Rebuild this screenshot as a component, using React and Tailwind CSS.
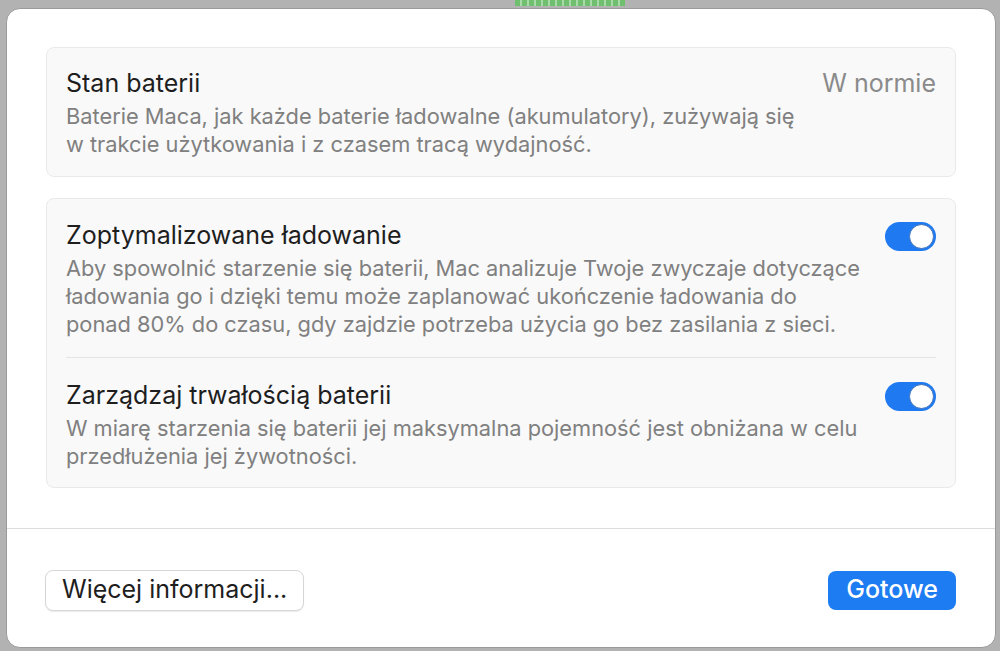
import React from 'react';

const Toggle = () => (
  <div className="flex h-[29px] w-[51px] shrink-0 items-center justify-end rounded-full bg-[#1f7af2] pr-[2px]">
    <div className="h-[25px] w-[25px] rounded-full border border-[#3b6fb8] bg-white" />
  </div>
);

const App = () => {
  return (
    <div
      className="flex h-[651px] w-[1000px] flex-col bg-[#b2b2b2] pl-[6px] pr-[4px] pb-[3px]"
      style={{ fontFamily: 'Inter, "Noto Sans", sans-serif' }}
    >
      <div className="flex h-[8px] shrink-0">
        <div className="ml-[509px] h-[6px] w-[110px] bg-[repeating-linear-gradient(90deg,#6fbf6f_0_5px,#a9d9a9_5px_7px)]" />
      </div>
      <div className="flex flex-1 flex-col overflow-hidden rounded-[14px] border border-[#9a9a9a] bg-white">
        <div className="flex flex-col gap-[21px] px-[39px] pt-[38px]">
          <div className="flex h-[130px] flex-col rounded-[8px] border border-[#e9e9e9] bg-[#f9f9f9] px-[19px] pt-[20px]">
            <div className="flex items-start justify-between">
              <div className="text-[25px] leading-[30px] text-[#1e1e1e]">Stan baterii</div>
              <div className="text-[25px] leading-[30px] text-[#8a8a8a]">W normie</div>
            </div>
            <p className="mt-[4px] text-[21.8px] leading-[28px] text-[#808080]">
              Baterie Maca, jak każde baterie ładowalne (akumulatory), zużywają się
              <br />
              w trakcie użytkowania i z czasem tracą wydajność.
            </p>
          </div>

          <div className="flex h-[290px] flex-col rounded-[8px] border border-[#e9e9e9] bg-[#f9f9f9] px-[19px] pt-[21px]">
            <div className="flex items-start justify-between gap-6 pb-[19px]">
              <div className="flex flex-col">
                <div className="text-[25px] leading-[30px] text-[#1e1e1e]">Zoptymalizowane ładowanie</div>
                <p className="mt-[4px] text-[21.8px] leading-[28px] text-[#808080]">
                  Aby spowolnić starzenie się baterii, Mac analizuje Twoje zwyczaje dotyczące
                  <br />
                  ładowania go i dzięki temu może zaplanować ukończenie ładowania do
                  <br />
                  ponad 80% do czasu, gdy zajdzie potrzeba użycia go bez zasilania z sieci.
                </p>
              </div>
              <div className="pt-[2px]">
                <Toggle />
              </div>
            </div>
            <div className="h-px bg-[#e4e4e4]" />
            <div className="flex items-start justify-between gap-6 pt-[22px]">
              <div className="flex flex-col">
                <div className="text-[25px] leading-[30px] text-[#1e1e1e]">Zarządzaj trwałością baterii</div>
                <p className="mt-[4px] text-[21.8px] leading-[28px] text-[#808080]">
                  W miarę starzenia się baterii jej maksymalna pojemność jest obniżana w celu
                  <br />
                  przedłużenia jej żywotności.
                </p>
              </div>
              <div className="pt-[2px]">
                <Toggle />
              </div>
            </div>
          </div>
        </div>

        <div className="mt-[40px] h-px bg-[#dcdcdc]" />

        <div className="flex flex-1 items-center justify-between pl-[38px] pr-[39px] pt-[4px]">
          <button className="flex h-[41px] items-center rounded-[8px] border border-[#d6d6d6] bg-white px-[16px] text-[25px] text-[#1e1e1e] shadow-[0_1px_1px_rgba(0,0,0,0.08)]">
            Więcej informacji...
          </button>
          <button className="flex h-[39px] items-center rounded-[8px] bg-[#1d7cf2] px-[18px] text-[25px] font-medium text-white">
            Gotowe
          </button>
        </div>
      </div>
    </div>
  );
};

export default App;
